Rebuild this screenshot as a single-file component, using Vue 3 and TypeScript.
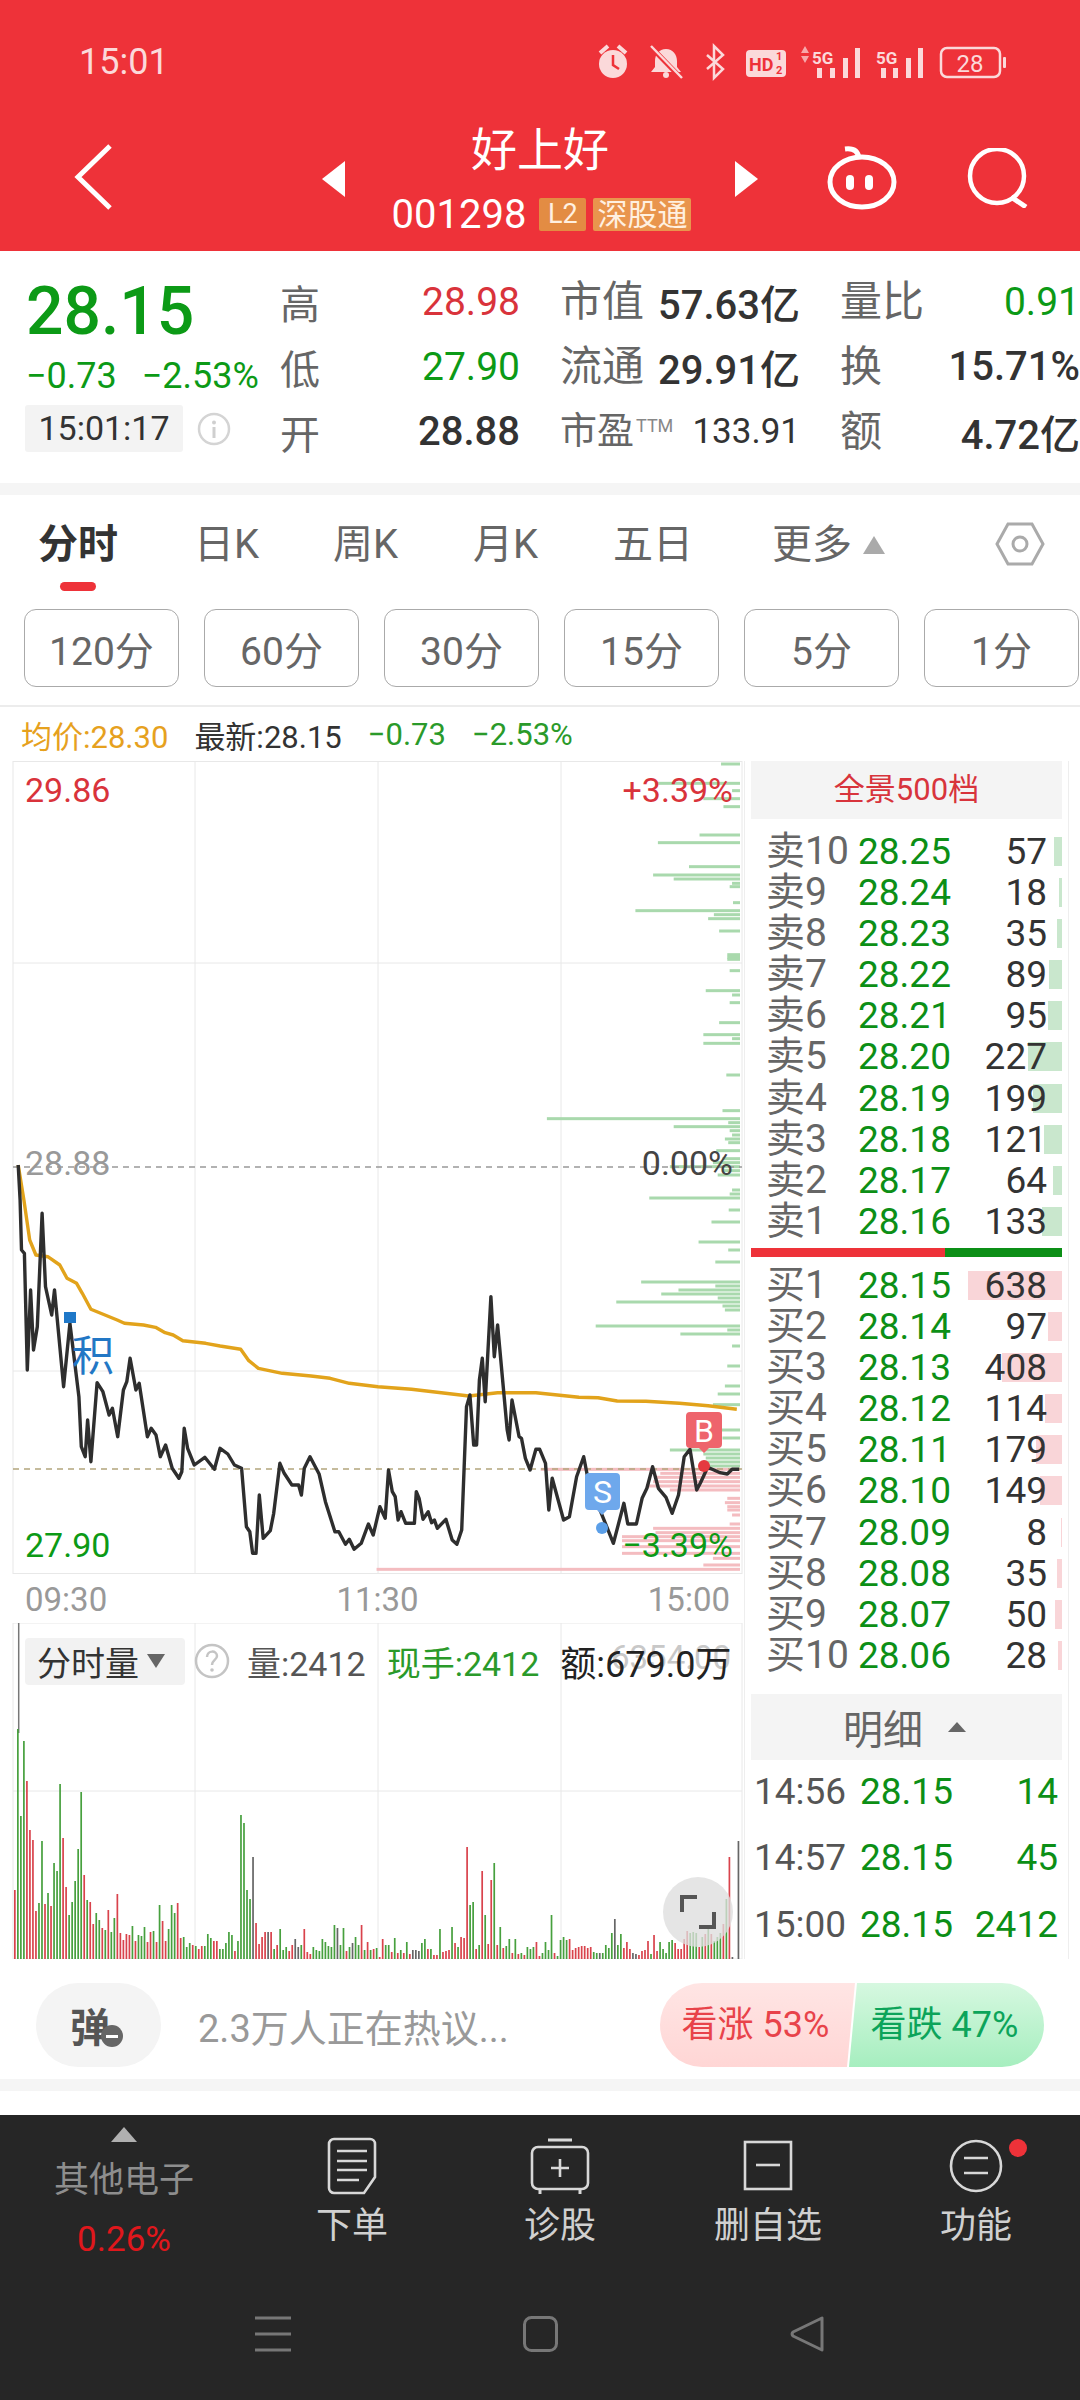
<script setup lang="ts">
type Level = { name: string; price: string; qty: number };
type Point = [number, number];

const tabs = ["日K", "周K", "月K", "五日"];
const intervals = ["120分", "60分", "30分", "15分", "5分", "1分"];

const asks: Level[] = [
  { name: "10", price: "28.25", qty: 57 },
  { name: "9", price: "28.24", qty: 18 },
  { name: "8", price: "28.23", qty: 35 },
  { name: "7", price: "28.22", qty: 89 },
  { name: "6", price: "28.21", qty: 95 },
  { name: "5", price: "28.20", qty: 227 },
  { name: "4", price: "28.19", qty: 199 },
  { name: "3", price: "28.18", qty: 121 },
  { name: "2", price: "28.17", qty: 64 },
  { name: "1", price: "28.16", qty: 133 },
];
const bids: Level[] = [
  { name: "1", price: "28.15", qty: 638 },
  { name: "2", price: "28.14", qty: 97 },
  { name: "3", price: "28.13", qty: 408 },
  { name: "4", price: "28.12", qty: 114 },
  { name: "5", price: "28.11", qty: 179 },
  { name: "6", price: "28.10", qty: 149 },
  { name: "7", price: "28.09", qty: 8 },
  { name: "8", price: "28.08", qty: 35 },
  { name: "9", price: "28.07", qty: 50 },
  { name: "10", price: "28.06", qty: 28 },
];
const ticks = [
  { time: "14:56", price: "28.15", qty: 14 },
  { time: "14:57", price: "28.15", qty: 45 },
  { time: "15:00", price: "28.15", qty: 2412 },
];

// intraday series, sampled at 2.09 units per px across and 3 per px down, from y = 1200
const priceSamples: Point[] = [
  [38, -105], [42, 0], [45, 150], [51, 160], [57, 510], [64, 270], [70, 450], [78, 380], [88, 40], [95, 260],
  [108, 345], [114, 270], [133, 560], [146, 370], [165, 590], [170, 740], [178, 770], [183, 660], [190, 785],
  [203, 548], [215, 575], [228, 645], [235, 625], [246, 710], [258, 570], [265, 545], [272, 475], [284, 570],
  [291, 550], [308, 710], [316, 685], [326, 705], [335, 770], [346, 735], [360, 805], [374, 835], [380, 815],
  [385, 685], [392, 745], [406, 795], [428, 772], [448, 808], [460, 745], [476, 762], [490, 795], [505, 805],
  [515, 980], [522, 995], [528, 1060], [535, 1060], [542, 885], [550, 1015], [565, 992], [572, 940], [585, 790],
  [594, 820], [610, 855], [624, 855], [630, 885], [636, 805], [648, 770], [667, 822], [680, 905], [700, 995],
  [708, 995], [722, 1033], [730, 1018], [740, 1048], [755, 1030], [770, 972], [780, 1005], [794, 920], [805, 955],
  [812, 810], [820, 875], [826, 890], [832, 960], [838, 935], [848, 970], [866, 970], [870, 875], [876, 895],
  [884, 958], [895, 935], [902, 968], [908, 960], [914, 985], [932, 958], [945, 1020], [955, 1033], [965, 990],
  [975, 620], [982, 585], [990, 735], [996, 735], [1002, 540], [1008, 475], [1014, 605], [1026, 290], [1033, 470],
  [1040, 375], [1060, 690], [1064, 720], [1070, 600], [1085, 710], [1090, 715], [1098, 775], [1108, 810],
  [1120, 748], [1128, 748], [1140, 790], [1147, 930], [1154, 835], [1178, 960], [1190, 950], [1205, 830],
  [1220, 770], [1232, 860], [1240, 880], [1282, 1030], [1304, 910], [1312, 972], [1330, 972], [1342, 895],
  [1352, 865], [1364, 800], [1376, 865], [1392, 892], [1405, 940], [1418, 885], [1430, 770], [1442, 748],
  [1456, 870], [1464, 848], [1478, 805], [1484, 805], [1505, 818], [1520, 822], [1530, 808], [1545, 808],
];
const avgSamples: Point[] = [
  [38, -105], [50, 0], [62, 120], [75, 165], [100, 170], [125, 195], [140, 235], [160, 250], [172, 280], [190, 328],
  [245, 360], [260, 370], [300, 375], [325, 382], [345, 398], [362, 405], [382, 422], [430, 430], [460, 438],
  [503, 448], [520, 482], [540, 505], [590, 520], [650, 528], [690, 535], [730, 550], [790, 560], [860, 568],
  [980, 588], [1040, 578], [1120, 578], [1210, 592], [1250, 593], [1290, 603], [1350, 604], [1420, 610],
  [1480, 617], [1540, 628],
];

const toPolyline = (samples: Point[]) =>
  samples.map(([x, y]) => `${(x / 2.09).toFixed(1)},${(1200 + y / 3).toFixed(1)}`).join(" ");
const pricePoints = toPolyline(priceSamples);
const avgPoints = toPolyline(avgSamples);

// volume by price: [row, left edge], same sampling as the series above
const upperProfile: Point[] = [
  [42, 1507], [100, 1370], [122, 1530], [146, 1470], [170, 1512], [255, 1462], [278, 1375], [350, 1440], [375, 1365],
  [387, 1408], [400, 1530], [410, 1525], [458, 1532], [482, 1328], [494, 1492], [506, 1480], [543, 1503], [614, 1520],
  [622, 1520], [628, 1520], [662, 1525], [722, 1475], [735, 1530], [758, 1525], [818, 1503], [854, 1470], [866, 1530],
  [880, 1470], [975, 1518], [1082, 1510], [1106, 1143], [1118, 1522], [1130, 1408], [1142, 1525], [1155, 1530],
  [1167, 1515], [1178, 1522], [1202, 1497], [1226, 1510], [1238, 1490], [1250, 1400], [1262, 1510], [1275, 1500],
  [1320, 1530], [1332, 1525], [1344, 1357],
];
const greenProfile: Point[] = [
  [30, 1523], [66, 1487], [126, 1460], [150, 1522], [186, 1495], [246, 1340], [258, 1495], [270, 1418], [282, 1382],
  [294, 1500], [306, 1288], [318, 1510], [330, 1515], [378, 1245], [390, 1520], [402, 1422], [438, 1530], [498, 1520],
  [558, 1515], [582, 1500], [614, 1490], [690, 1490], [714, 1510], [750, 1400], [762, 1470], [774, 1475], [786, 1470],
  [798, 1480],
];
const redProfile: Point[] = [
  [808, 1130], [820, 1380], [832, 1370], [845, 1365], [858, 1350], [870, 1400], [895, 1520], [908, 1515], [920, 1520],
  [930, 1520], [945, 1530], [972, 1525], [985, 1365], [998, 1370], [1010, 1300], [1022, 1300], [1040, 1300],
  [1060, 1300], [1075, 1490], [1095, 1470], [1108, 787],
];

const toBars = (samples: Point[], origin: number) =>
  samples.map(([row, left]) => ({
    x: left / 2.09,
    y: origin + row / 3 - 1.5,
    width: 740 - left / 2.09,
  }));
const greenBars = [...toBars(upperProfile, 750), ...toBars(greenProfile, 1200)];
const redBars = toBars(redProfile, 1200);

// per-minute volume: colour letter plus bar height
const volumeData =
  "r69 g230 g143 g218 r178 r129 r119 r48 g56 g118 r55 g66 r53 g96 g88 g175 r121 r72 g44 g57 g78 g110 g167 r84 g59 r57 r35 g46 g39 r31 " +
  "g29 r49 g27 g41 r65 r26 r19 r25 r24 g33 r18 g24 g23 g32 r17 r27 g28 r17 g54 r38 r18 g30 g54 g46 r56 r21 g22 g12 g16 r14 " +
  "g13 r10 r13 g13 g25 g21 r18 r18 g10 g10 g16 g27 g24 r8 g18 g144 g136 g69 g60 k102 r36 r15 r22 r27 k27 r27 g10 r14 g30 g9 " +
  "g12 r8 r14 k20 k12 g14 r30 r7 r5 g12 g9 g8 g20 g17 g13 g12 g34 k31 g14 g31 r8 g12 k16 g22 g14 r34 g9 r17 g9 r10 " +
  "g11 r2 r20 g14 g14 r7 g21 r6 g9 r6 g17 r5 k9 k9 k8 g16 g20 r10 g10 r4 r4 g30 r7 r8 r9 g32 r16 g12 r22 r21 " +
  "r112 g54 g57 r10 g14 r88 g44 r15 r79 g96 r14 g32 r11 g13 g20 r6 g20 r5 g6 r4 g12 g10 g12 r17 r3 g6 g17 g9 g44 r6 " +
  "g3 g19 g22 g19 r20 r9 r11 r12 r13 r13 r11 r12 g7 g6 k6 g6 g14 g11 g26 k40 g14 g25 r11 r17 r10 k6 k5 r4 r8 r9 " +
  "r18 g5 r24 r8 g17 g10 g6 g17 g19 r16 r10 r10 r20 r28 g26 g27 g26 r12 g22 r25 g30 r25 g18 g22 g26 r35 g60 r102 k2 k0 k118";

const volumeColors: Record<string, string> = { r: "#d9434c", g: "#47a03e", k: "#666666" };
const volumeBars = volumeData.split(" ").map((item, i) => {
  const height = Number(item.slice(1));
  return {
    x: 14 + 3.015 * i,
    y: 1959 - height,
    height,
    color: volumeColors[item[0]],
  };
});

const barWidth = (qty: number) => `${qty * 0.148}px`;
</script>

<template>
  <div class="screen">
    <header class="topbar">
      <div class="status">
        <span class="clock">15:01</span>
        <svg class="status-icons" width="412" height="44" viewBox="597 40 412 44">
          <!-- alarm -->
          <circle cx="613" cy="64" r="14" fill="#fbd9da" />
          <path d="M600 53l8-7M626 53l-8-7" stroke="#fbd9da" stroke-width="4" fill="none" />
          <path d="M613 55v10l6 4" stroke="#ee3239" stroke-width="2.5" fill="none" />
          <!-- muted bell -->
          <path d="M666 49c-7 0-11 6-11 12v6l-4 5h30l-4-5v-6c0-6-4-12-11-12z" fill="#fbd9da" />
          <circle cx="666" cy="75" r="3" fill="#fbd9da" />
          <path d="M651 47l30 31" stroke="#ee3239" stroke-width="5" />
          <path d="M651 46l31 32" stroke="#fbd9da" stroke-width="2.5" />
          <!-- bluetooth -->
          <path d="M707 55l16 14-9 9V46l9 9-16 14" stroke="#fbd9da" stroke-width="2.5" fill="none" />
          <!-- hd voice -->
          <rect x="746" y="50" width="40" height="27" rx="4" fill="#fbd9da" />
          <text class="hd" x="749" y="71">HD</text>
          <text class="hd-small" x="776" y="60">1</text>
          <text class="hd-small" x="776" y="74">2</text>
          <!-- first signal -->
          <path d="M801 53l4-7 4 7zM801 56l4 7 4-7z" fill="#f7a8ab" />
          <text class="net" x="812" y="64">5G</text>
          <rect x="817" y="68" width="5" height="10" fill="#fbd9da" />
          <rect x="830" y="68" width="5" height="10" fill="#fbd9da" />
          <rect x="843" y="58" width="5" height="20" fill="#fbd9da" />
          <rect x="855" y="48" width="5" height="30" fill="#fbd9da" />
          <!-- second signal -->
          <text class="net" x="876" y="64">5G</text>
          <rect x="881" y="68" width="5" height="10" fill="#fbd9da" />
          <rect x="893" y="68" width="5" height="10" fill="#fbd9da" />
          <rect x="906" y="58" width="5" height="20" fill="#fbd9da" />
          <rect x="918" y="48" width="5" height="30" fill="#fbd9da" />
          <!-- battery -->
          <rect x="941" y="48" width="59" height="29" rx="6" fill="none" stroke="#fbd9da" stroke-width="2.5" />
          <rect x="1003" y="57" width="3" height="11" rx="1" fill="#fbd9da" />
          <text class="battery" x="970" y="72">28</text>
        </svg>
      </div>
      <nav class="nav">
        <div class="nav-left">
          <svg class="back" width="40" height="66" viewBox="0 0 40 66">
            <path d="M36 2L4 33l32 31" fill="none" stroke="#fff" stroke-width="5" />
          </svg>
        </div>
        <div class="nav-center">
          <span class="tri tri-left"></span>
          <div class="title-block">
            <div class="title">好上好</div>
            <div class="code-row">
              <span class="code">001298</span>
              <span class="badge badge-l2">L2</span>
              <span class="badge badge-sz">深股通</span>
            </div>
          </div>
          <span class="tri tri-right"></span>
        </div>
        <div class="nav-right">
          <svg class="bot" width="70" height="64" viewBox="0 0 70 64">
            <ellipse cx="35" cy="36" rx="32" ry="25" fill="none" stroke="#fff" stroke-width="5" />
            <path d="M18 3c8-1 13 2 14 9" fill="none" stroke="#fff" stroke-width="5" />
            <rect x="19" y="29" width="8" height="15" rx="4" fill="#fff" />
            <rect x="38" y="29" width="8" height="15" rx="4" fill="#fff" />
          </svg>
          <svg class="search" width="62" height="60" viewBox="0 0 62 60">
            <circle cx="30" cy="28" r="27" fill="none" stroke="#fff" stroke-width="4.5" />
            <path d="M44 49l15 10" stroke="#fff" stroke-width="5" />
          </svg>
        </div>
      </nav>
    </header>

    <section class="quote">
      <div class="summary">
        <div class="last">28.15</div>
        <div class="change"><span>−0.73</span><span>−2.53%</span></div>
        <div class="time-row">
          <span class="time-box">15:01:17</span>
          <svg width="34" height="34" viewBox="0 0 34 34">
            <circle cx="17" cy="17" r="15" fill="none" stroke="#d4d4d4" stroke-width="2.5" />
            <rect x="15.5" y="15" width="3" height="11" fill="#cfcfcf" />
            <circle cx="17" cy="10.5" r="2" fill="#cfcfcf" />
          </svg>
        </div>
      </div>

      <span class="lab-big">高</span>
      <span class="val up">28.98</span>
      <span class="lab">市值</span>
      <span class="val strong">57.63亿</span>
      <span class="lab">量比</span>
      <span class="val down">0.91</span>

      <span class="lab-big">低</span>
      <span class="val down">27.90</span>
      <span class="lab">流通</span>
      <span class="val strong">29.91亿</span>
      <span class="lab">换</span>
      <span class="val strong">15.71%</span>

      <span class="lab-big">开</span>
      <span class="val strong">28.88</span>
      <span class="lab lab-pe">市盈<small>TTM</small></span>
      <span class="val pe">133.91</span>
      <span class="lab">额</span>
      <span class="val strong">4.72亿</span>
    </section>
    <div class="band"></div>

    <div class="tabs">
      <div class="tab tab-active">
        分时
        <i class="tab-line"></i>
      </div>
      <div v-for="tab in tabs" :key="tab" class="tab">{{ tab }}</div>
      <div class="tab">更多<i class="more-tri"></i></div>
      <svg class="hex" width="50" height="46" viewBox="0 0 50 46">
        <path d="M2 23L13 3h24l11 20-11 20H13z" fill="none" stroke="#aaa" stroke-width="3" />
        <circle cx="25" cy="23" r="7" fill="none" stroke="#aaa" stroke-width="3" />
      </svg>
    </div>

    <div class="intervals">
      <div v-for="item in intervals" :key="item" class="interval">{{ item }}</div>
    </div>

    <div class="legend">
      <span class="avg">均价:28.30</span>
      <span class="latest">最新:28.15</span>
      <span class="drop">−0.73</span>
      <span class="drop">−2.53%</span>
    </div>

    <main class="board">
      <div class="chart-col">
        <svg class="price-chart" width="744" height="815" viewBox="0 761 744 815">
          <rect x="13" y="761.5" width="729" height="812" fill="none" stroke="#e8e8e8" />
          <path d="M195 761v813M378 761v813M561 761v813M13 963h729M13 1371h729" stroke="#e8e8e8" />

          <rect v-for="(bar, i) in greenBars" :key="'g' + i" :x="bar.x" :y="bar.y" :width="bar.width" height="3" fill="#a9d9ad" />
          <rect v-for="(bar, i) in redBars" :key="'r' + i" :x="bar.x" :y="bar.y" :width="bar.width" height="3" fill="#f4bcc0" />

          <path d="M13 1167h729" stroke="#999" stroke-width="1.5" stroke-dasharray="6 5" />
          <path d="M13 1469h729" stroke="#b3a57c" stroke-width="1.5" stroke-dasharray="6 5" />

          <text class="axis up" x="25" y="802">29.86</text>
          <text class="axis up" x="733" y="802" text-anchor="end">+3.39%</text>
          <text class="axis muted" x="25" y="1175">28.88</text>
          <text class="axis flat" x="733" y="1175" text-anchor="end">0.00%</text>
          <text class="axis down" x="25" y="1557">27.90</text>
          <text class="axis down" x="733" y="1557" text-anchor="end">−3.39%</text>

          <polyline :points="avgPoints" fill="none" stroke="#e2a31b" stroke-width="3.4" stroke-linejoin="round" />
          <polyline :points="pricePoints" fill="none" stroke="#2e2e2e" stroke-width="3.4" stroke-linejoin="round" />

          <!-- accumulation marker -->
          <rect x="64" y="1312" width="12" height="11" fill="#1f78c8" />
          <text class="mark-ji" x="72" y="1371">积</text>

          <!-- sell marker -->
          <path d="M589 1473h27a4 4 0 0 1 4 4v29a4 4 0 0 1-4 4h-9l-5 5-5-5h-8a4 4 0 0 1-4-4v-29a4 4 0 0 1 4-4z" fill="#6ea8ec" />
          <text class="mark-letter" x="602.5" y="1503">S</text>
          <circle cx="602" cy="1528" r="6" fill="#5b9fe8" />

          <!-- buy marker -->
          <path d="M690 1412h28a4 4 0 0 1 4 4v28a4 4 0 0 1-4 4h-9l-5 5-5-5h-9a4 4 0 0 1-4-4v-28a4 4 0 0 1 4-4z" fill="#ee646c" />
          <text class="mark-letter" x="704" y="1442">B</text>
          <circle cx="704" cy="1466" r="6" fill="#e5393f" />
        </svg>

        <div class="time-axis">
          <span>09:30</span>
          <span>11:30</span>
          <span>15:00</span>
        </div>

        <div class="volume">
          <svg width="744" height="336" viewBox="0 1623 744 336">
            <path d="M13 1623h729M13 1791h729M13 1959h729M195 1623v336M378 1623v336M561 1623v336M13 1623v336M742 1623v336" stroke="#e8e8e8" />
            <path d="M18.7 1623v110" stroke="#777" stroke-width="1.5" />
            <text class="vol-ghost" x="731" y="1669" text-anchor="end">6354.00</text>
            <rect
              v-for="(bar, i) in volumeBars"
              :key="i"
              :x="bar.x"
              :y="bar.y"
              width="1.7"
              :height="bar.height"
              :fill="bar.color"
            />
          </svg>
          <div class="vol-toolbar">
            <div class="vol-select">分时量<i class="vol-caret"></i></div>
            <svg class="vol-help" width="36" height="36" viewBox="0 0 36 36">
              <circle cx="18" cy="18" r="16" fill="none" stroke="#c4c4c4" stroke-width="2.5" />
              <path d="M13 14c0-7 10-7 10-1 0 4-5 4-5 9" fill="none" stroke="#c4c4c4" stroke-width="2.5" />
              <circle cx="18" cy="27" r="1.8" fill="#c4c4c4" />
            </svg>
            <span class="vol-total">量:2412</span>
            <span class="vol-now">现手:2412</span>
            <span class="vol-amount">额:679.0万</span>
          </div>
          <div class="expand">
            <svg width="36" height="36" viewBox="0 0 36 36">
              <path d="M17 3H2v15M19 33h15V18" fill="none" stroke="#555" stroke-width="4" />
            </svg>
          </div>
        </div>
      </div>

      <aside class="book">
        <div class="book-head">全景500档</div>
        <div class="levels">
          <div v-for="row in asks" :key="row.name" class="level">
            <i class="level-bar ask-bar" :style="{ width: barWidth(row.qty) }"></i>
            <span class="level-name">卖{{ row.name }}</span>
            <span class="level-price">{{ row.price }}</span>
            <span class="level-qty">{{ row.qty }}</span>
          </div>
        </div>
        <div class="split"><i class="split-red"></i><i class="split-green"></i></div>
        <div class="levels bids">
          <div v-for="row in bids" :key="row.name" class="level">
            <i class="level-bar bid-bar" :style="{ width: barWidth(row.qty) }"></i>
            <span class="level-name">买{{ row.name }}</span>
            <span class="level-price">{{ row.price }}</span>
            <span class="level-qty">{{ row.qty }}</span>
          </div>
        </div>
        <div class="detail-head">明细<i class="detail-tri"></i></div>
        <div class="ticks">
          <div v-for="tick in ticks" :key="tick.time" class="tick">
            <span class="tick-time">{{ tick.time }}</span>
            <span class="tick-price">{{ tick.price }}</span>
            <span class="tick-qty">{{ tick.qty }}</span>
          </div>
        </div>
      </aside>
    </main>

    <div class="talk">
      <div class="danmu">
        <span>弹</span>
        <i class="danmu-off"></i>
      </div>
      <span class="talk-text">2.3万人正在热议...</span>
      <div class="vote">
        <span class="vote-up">看涨 53%</span>
        <span class="vote-down">看跌 47%</span>
      </div>
    </div>
    <div class="band band-low"></div>
    <div class="gap-white"></div>

    <footer class="footer">
      <div class="dock">
        <div class="sector">
          <i class="sector-tri"></i>
          <span class="sector-name">其他电子</span>
          <span class="sector-pct">0.26%</span>
        </div>
        <div class="action">
          <svg width="50" height="58" viewBox="0 0 50 58">
            <path d="M7 2h36a5 5 0 0 1 5 5v33L37 56H7a5 5 0 0 1-5-5V7a5 5 0 0 1 5-5z" fill="none" stroke="#d8d8d8" stroke-width="2.6" />
            <path d="M10 14h30M10 24h30M10 33h30M10 43h22" stroke="#d8d8d8" stroke-width="2.6" />
          </svg>
          <span>下单</span>
        </div>
        <div class="action">
          <svg width="60" height="58" viewBox="0 0 60 58">
            <path d="M18 3h24" stroke="#d8d8d8" stroke-width="3" />
            <rect x="2" y="10" width="56" height="42" rx="6" fill="none" stroke="#d8d8d8" stroke-width="2.6" />
            <path d="M30 22v18M21 31h18" stroke="#d8d8d8" stroke-width="2.6" />
            <path d="M10 53v4M50 53v4" stroke="#d8d8d8" stroke-width="3" />
          </svg>
          <span>诊股</span>
        </div>
        <div class="action">
          <svg width="50" height="58" viewBox="0 0 50 58">
            <rect x="2" y="5" width="46" height="47" fill="none" stroke="#d8d8d8" stroke-width="2.6" />
            <path d="M13 28h24" stroke="#d8d8d8" stroke-width="2.6" />
          </svg>
          <span>删自选</span>
        </div>
        <div class="action">
          <svg width="54" height="58" viewBox="0 0 54 58">
            <circle cx="27" cy="29" r="25" fill="none" stroke="#d8d8d8" stroke-width="2.6" />
            <path d="M15 21h24M15 36h24" stroke="#d8d8d8" stroke-width="2.6" />
          </svg>
          <span>功能</span>
          <i class="notice"></i>
        </div>
      </div>
      <div class="keys">
        <svg width="36" height="36" viewBox="0 0 36 36">
          <path d="M0 2h36M0 18h36M0 34h36" stroke="#777" stroke-width="3" />
        </svg>
        <svg width="35" height="36" viewBox="0 0 35 36">
          <rect x="1.5" y="1.5" width="32" height="33" rx="7" fill="none" stroke="#777" stroke-width="3" />
        </svg>
        <svg width="35" height="36" viewBox="0 0 35 36">
          <path d="M32 2v32L3 20a3 3 0 0 1 0-4z" fill="none" stroke="#777" stroke-width="3" stroke-linejoin="round" />
        </svg>
      </div>
    </footer>
  </div>
</template>

<style scoped>
.screen {
  width: 1080px;
  height: 2400px;
  display: flex;
  flex-direction: column;
  overflow: hidden;
  background: #fff;
  font-family: Roboto, "Noto Sans CJK SC", sans-serif;
  color: #333;
}

.topbar {
  height: 251px;
  flex: none;
  background: #ee3239;
  color: #fff;
}

.status {
  height: 124px;
  display: flex;
  align-items: center;
  justify-content: space-between;
  padding: 0 71px 0 79px;
}

.clock {
  font-size: 36px;
  color: #fbd9da;
}

.hd {
  font-size: 18px;
  font-weight: 700;
  fill: #ee3239;
}

.hd-small {
  font-size: 11px;
  font-weight: 700;
  fill: #ee3239;
}

.net {
  font-size: 17px;
  font-weight: 700;
  fill: #fbd9da;
}

.battery {
  font-size: 24px;
  fill: #fbd9da;
  text-anchor: middle;
}

.nav {
  display: grid;
  grid-template-columns: 322px 436px 1fr;
  align-items: start;
}

.nav-left {
  padding: 20px 0 0 74px;
}

.nav-center {
  display: flex;
  justify-content: space-between;
}

.tri {
  width: 0;
  height: 0;
  margin-top: 37px;
  border-top: 18px solid transparent;
  border-bottom: 18px solid transparent;
}

.tri-left {
  border-right: 23px solid #fff;
}

.tri-right {
  border-left: 23px solid #fff;
}

.title-block {
  display: flex;
  flex-direction: column;
  align-items: center;
}

.title {
  height: 52px;
  font-size: 46px;
  line-height: 52px;
}

.code-row {
  display: flex;
  align-items: center;
  gap: 7px;
  margin-top: 22px;
  margin-left: 3px;
}

.code {
  font-size: 40px;
  line-height: 33px;
  margin-right: 6px;
}

.badge {
  height: 33px;
  line-height: 33px;
  font-size: 27px;
  text-align: center;
  border-radius: 2px;
  color: #fff0e0;
}

.badge-l2 {
  width: 47px;
  background: #e38c43;
}

.badge-sz {
  width: 98px;
  font-size: 30px;
  background: #e9954d;
}

.nav-right {
  display: flex;
  align-items: flex-start;
  padding: 22px 0 0 69px;
}

.search {
  margin: 2px 0 0 70px;
}

.quote {
  height: 232px;
  flex: none;
  box-sizing: border-box;
  padding-top: 18px;
  display: grid;
  grid-template-columns: 280px 60px 180px 125px 155px 125px 155px;
  grid-auto-rows: 65px;
  align-items: center;
}

.summary {
  grid-column: 1;
  grid-row: 1 / 4;
  align-self: start;
  padding-left: 26px;
}

.last {
  margin-top: 12px;
  height: 62px;
  line-height: 62px;
  font-size: 66px;
  font-weight: 500;
  color: #0c9a16;
}

.change {
  display: flex;
  gap: 25px;
  margin-top: 14px;
  height: 38px;
  line-height: 38px;
  font-size: 36px;
  color: #0c9a16;
}

.time-row {
  display: flex;
  align-items: center;
  gap: 14px;
  margin-top: 10px;
}

.time-box {
  width: 158px;
  height: 47px;
  line-height: 47px;
  margin-left: -1px;
  background: #f3f3f3;
  border-radius: 3px;
  text-align: center;
  font-size: 34px;
  color: #333;
}

.lab-big {
  grid-column: 2;
  font-size: 40px;
  color: #666;
}

.lab {
  padding-left: 40px;
  font-size: 42px;
  line-height: 1;
  color: #666;
  white-space: nowrap;
}

.lab-pe {
  font-size: 37px;
}

.lab-pe small {
  font-size: 18px;
  color: #888;
  vertical-align: 12px;
  margin-left: 2px;
}

.val {
  text-align: right;
  font-size: 39px;
  white-space: nowrap;
}

.val.strong {
  color: #333;
  font-weight: 500;
  font-size: 40px;
}

.val.pe {
  font-size: 35px;
}

.val.up,
.up {
  color: #d9333b;
  fill: #d9333b;
}

.val.down,
.down {
  color: #0c9a16;
  fill: #0c9a16;
}

.band {
  height: 12px;
  flex: none;
  background: #f5f5f5;
}

.tabs {
  flex: none;
  height: 114px;
  box-sizing: border-box;
  padding: 25px 0 0 38px;
  display: grid;
  grid-template-columns: 156px 139px 140px 140px 159px 223px 50px;
  align-items: start;
}

.tab {
  display: flex;
  flex-direction: column;
  align-items: flex-start;
  font-size: 40px;
  line-height: 50px;
  color: #666;
  white-space: nowrap;
}

.tab:nth-child(6) {
  flex-direction: row;
  align-items: center;
}

.tab-active {
  font-weight: 700;
  color: #333;
}

.tab-line {
  width: 36px;
  height: 9px;
  margin: 12px 0 0 22px;
  border-radius: 5px;
  background: #ee3239;
}

.more-tri {
  width: 0;
  height: 0;
  margin-left: 11px;
  border-left: 11px solid transparent;
  border-right: 11px solid transparent;
  border-bottom: 18px solid #aaa;
}

.hex {
  margin-top: 1px;
}

.intervals {
  flex: none;
  display: flex;
  gap: 25px;
  padding-left: 24px;
  padding-bottom: 18px;
  border-bottom: 2px solid #ececec;
}

.interval {
  width: 155px;
  height: 78px;
  flex: none;
  box-sizing: border-box;
  border: 1px solid #aaa;
  border-radius: 12px;
  display: flex;
  align-items: center;
  justify-content: center;
  font-size: 39px;
  color: #666;
}

.legend {
  flex: none;
  height: 54px;
  display: flex;
  align-items: center;
  gap: 26px;
  padding-left: 21px;
  font-size: 31px;
}

.avg {
  color: #e6a11e;
}

.latest {
  color: #333;
}

.drop {
  color: #2a9a2a;
}

.board {
  flex: none;
  height: 1198px;
  display: grid;
  grid-template-columns: 744px 336px;
}

.chart-col {
  display: flex;
  flex-direction: column;
}

.price-chart {
  display: block;
}

.axis {
  font-size: 34px;
}

.muted {
  fill: #999;
}

.flat {
  fill: #444;
}

.mark-ji {
  font-size: 42px;
  fill: #2277c5;
}

.mark-letter {
  font-size: 32px;
  fill: #fff;
  text-anchor: middle;
}

.time-axis {
  height: 47px;
  display: flex;
  justify-content: space-between;
  align-items: center;
  padding: 0 14px 0 25px;
  font-size: 33px;
  color: #999;
}

.volume {
  position: relative;
  height: 336px;
}

.volume svg {
  display: block;
}

.vol-ghost {
  font-size: 33px;
  fill: #c8c8c8;
}

.vol-toolbar {
  position: absolute;
  top: 12px;
  left: 25px;
  display: flex;
  align-items: center;
  font-size: 34px;
  white-space: nowrap;
}

.vol-select {
  width: 160px;
  height: 47px;
  box-sizing: border-box;
  padding-left: 12px;
  display: flex;
  align-items: center;
  background: #f2f2f2;
  border-radius: 4px;
  color: #333;
  font-size: 34px;
}

.vol-caret {
  width: 0;
  height: 0;
  margin-left: 8px;
  border-left: 9px solid transparent;
  border-right: 9px solid transparent;
  border-top: 14px solid #666;
}

.vol-help {
  margin-left: 9px;
}

.vol-total {
  margin-left: 17px;
  color: #555;
}

.vol-now {
  margin-left: 21px;
  color: #2a9a2a;
}

.vol-amount {
  margin-left: 21px;
  font-size: 36px;
  color: #222;
}

.expand {
  position: absolute;
  left: 663px;
  top: 254px;
  width: 70px;
  height: 70px;
  border-radius: 50%;
  background: rgba(222, 222, 222, 0.78);
  display: flex;
  align-items: center;
  justify-content: center;
}

.book {
  box-sizing: border-box;
  padding: 0 18px 0 6px;
  border-left: 1px solid #eee;
  background: linear-gradient(#eeeeee, #eeeeee) 323px 0 / 1px 100% no-repeat;
}

.book-head {
  height: 58px;
  line-height: 58px;
  text-align: center;
  background: #f4f4f4;
  color: #d8343c;
  font-size: 31px;
}

.levels {
  margin-top: 12px;
}

.levels.bids {
  margin-top: 8px;
}

.level {
  position: relative;
  height: 41.1px;
  line-height: 41px;
  display: grid;
  grid-template-columns: 108px 1fr auto;
  padding: 0 15px 0 15px;
  font-size: 37px;
}

.level > span {
  position: relative;
}

.level-bar {
  position: absolute;
  right: 0;
  top: 6px;
  height: 29px;
}

.ask-bar {
  background: #c9e7cd;
}

.bid-bar {
  background: #f9d5d8;
}

.level-name {
  color: #666;
  font-size: 39px;
  white-space: nowrap;
}

.level-price {
  margin-left: -16px;
  color: #0c8f16;
}

.level-qty {
  color: #333;
}

.split {
  display: flex;
  height: 9px;
  margin-top: 6px;
}

.split-red {
  width: 194px;
  background: #ee3239;
}

.split-green {
  flex: 1;
  background: #0c8f16;
}

.detail-head {
  height: 66px;
  margin-top: 18px;
  display: flex;
  align-items: center;
  justify-content: center;
  gap: 25px;
  background: #f4f4f4;
  color: #666;
  font-size: 40px;
  padding-right: 4px;
}

.detail-tri {
  width: 0;
  height: 0;
  border-left: 9px solid transparent;
  border-right: 9px solid transparent;
  border-bottom: 10px solid #666;
}

.ticks {
  display: flex;
  flex-direction: column;
  gap: 16.5px;
  margin-top: 7px;
}

.tick {
  height: 50px;
  line-height: 50px;
  display: grid;
  grid-template-columns: 106px 1fr auto;
  padding: 0 4px 0 3px;
  font-size: 37px;
}

.tick-time {
  color: #555;
}

.tick-price,
.tick-qty {
  color: #0c8f16;
}

.talk {
  flex: none;
  height: 120px;
  box-sizing: border-box;
  padding: 24px 36px 12px;
  display: flex;
  align-items: center;
}

.danmu {
  position: relative;
  width: 125px;
  height: 84px;
  border-radius: 42px;
  background: #f4f4f4;
  display: flex;
  align-items: center;
  padding-left: 34px;
  box-sizing: border-box;
  font-size: 40px;
  font-weight: 700;
  color: #555;
}

.danmu-off {
  position: absolute;
  left: 65px;
  top: 42px;
  width: 22px;
  height: 22px;
  border-radius: 50%;
  background: #666 linear-gradient(#fff, #fff) center / 12px 3px no-repeat;
}

.talk-text {
  margin-left: 37px;
  font-size: 38px;
  color: #999;
}

.vote {
  margin-left: auto;
  display: flex;
  font-size: 36px;
}

.vote-up,
.vote-down {
  height: 84px;
  line-height: 84px;
  text-align: center;
  box-sizing: border-box;
}

.vote-up {
  width: 195px;
  padding-right: 4px;
  border-radius: 42px 0 0 42px;
  background: linear-gradient(#ffe5e4, #ffd6d5);
  color: #e8434a;
  clip-path: polygon(0 0, 100% 0, calc(100% - 8px) 100%, 0 100%);
}

.vote-down {
  width: 195px;
  margin-left: -6px;
  padding-right: 4px;
  border-radius: 0 42px 42px 0;
  background: linear-gradient(#d6f8e0, #a6eebf);
  color: #0ca45a;
  clip-path: polygon(8px 0, 100% 0, 100% 100%, 0 100%);
}

.band-low {
  background: #f5f5f5;
}

.gap-white {
  flex: none;
  height: 24px;
}

.footer {
  flex: 1;
  background: #262626;
}

.dock {
  height: 201px;
  display: grid;
  grid-template-columns: 248px repeat(4, 208px);
  align-items: start;
}

.sector {
  display: flex;
  flex-direction: column;
  align-items: center;
  padding-top: 12px;
}

.sector-tri {
  width: 0;
  height: 0;
  border-left: 13px solid transparent;
  border-right: 13px solid transparent;
  border-bottom: 15px solid #b0b0b0;
}

.sector-name {
  margin-top: 17px;
  height: 44px;
  line-height: 44px;
  font-size: 35px;
  color: #8e8e8e;
}

.sector-pct {
  margin-top: 15px;
  height: 44px;
  line-height: 44px;
  font-size: 35px;
  color: #e0171c;
}

.action {
  position: relative;
  display: flex;
  flex-direction: column;
  align-items: center;
  padding-top: 22px;
  color: #d0d0d0;
  font-size: 36px;
}

.action span {
  margin-top: 9px;
  line-height: 44px;
}

.notice {
  position: absolute;
  left: 137px;
  top: 24px;
  width: 18px;
  height: 18px;
  border-radius: 50%;
  background: #ee3239;
}

.keys {
  display: flex;
  justify-content: center;
  gap: 232px;
}
</style>

<style>
html,
body {
  margin: 0;
  background: #fff;
}
</style>
